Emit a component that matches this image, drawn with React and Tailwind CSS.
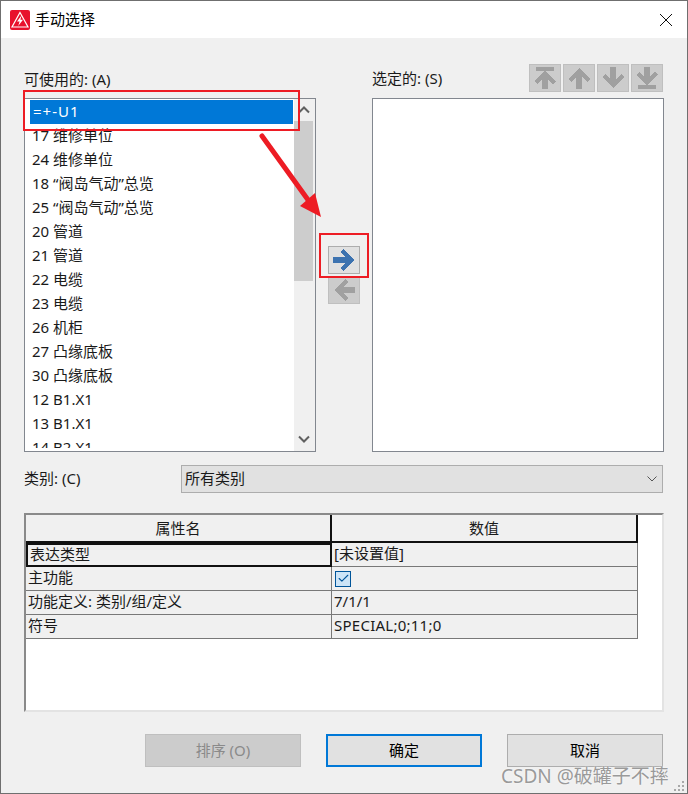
import { Check } from "lucide-react";

const items = [
  "17 维修单位",
  "24 维修单位",
  "18 “阀岛气动”总览",
  "25 “阀岛气动”总览",
  "20 管道",
  "21 管道",
  "22 电缆",
  "23 电缆",
  "26 机柜",
  "27 凸缘底板",
  "30 凸缘底板",
  "12 B1.X1",
  "13 B1.X1",
  "14 B2.X1",
];

const ARROW = "5,11 17,11 12,6 15,3 26,14 15,25 12,22 17,17 5,17";
const END_ARROW = "16,7 27,17 24,20 19,16 19,25 13,25 13,16 8,20 5,17";

function ArrowButton({ rotate = 0, end = false, active = false }) {
  const boxClass = active
    ? "bg-[#e1e1e1] border-[#adadad]"
    : "bg-[#cccccc] border-[#bfbfbf]";
  return (
    <div className={`h-[28px] w-[32px] border ${boxClass}`}>
      <svg width="30" height="26" viewBox="1 1 30 26" shapeRendering="crispEdges">
        <g transform={`rotate(${rotate} 16 14)`} fill={active ? "#3d73b0" : "#a0a0a0"}>
          <polygon points={end ? END_ARROW : ARROW} />
          {end && <rect x="7" y="3" width="18" height="4" />}
        </g>
      </svg>
    </div>
  );
}

function Chevron({ down = false }) {
  return (
    <svg width="12" height="8" viewBox="0 0 12 8">
      <path
        d={down ? "M1 1.5 L6 6.5 L11 1.5" : "M1 6.5 L6 1.5 L11 6.5"}
        fill="none"
        stroke="#606060"
        strokeWidth="2"
      />
    </svg>
  );
}

function Cell({ children, focus = false }) {
  return (
    <div
      className={`flex h-[24px] items-center bg-[#f0f0f0] pl-[2px] ${
        focus
          ? "border-2 border-[#111111] pb-px"
          : "border-b border-r border-[#787878] pb-[2px]"
      }`}
    >
      {children}
    </div>
  );
}

function FooterButton({ children, variant }) {
  const styles = {
    disabled: "bg-[#cccccc] border border-[#bfbfbf] text-[#8a8a8a]",
    primary: "bg-[#e1e1e1] border-2 border-[#0078d7] text-black",
    normal: "bg-[#e1e1e1] border border-[#adadad] text-black",
  };
  return (
    <div className={`flex h-[33px] w-[156px] items-center justify-center pb-px ${styles[variant]}`}>
      {children}
    </div>
  );
}

export default function App() {
  return (
    <div className="relative flex h-[794px] w-[688px] flex-col overflow-hidden border border-[#6f6f6f] bg-[#f0f0f0] font-['Noto_Sans','Noto_Sans_CJK_SC',sans-serif] text-[15px] leading-none text-[#1a1a1a]">
      {/* title bar */}
      <div className="flex h-[37px] shrink-0 items-center bg-white pl-[9px] pr-[15px]">
        <svg width="20" height="20" viewBox="0 0 20 20">
          <rect width="20" height="20" rx="2" fill="#e8112d" />
          <path d="M10 2.5 L18 17 H2 Z" fill="none" stroke="#fff" strokeWidth="1.2" />
          <path d="M11.5 5.5 L7 11.5 H9.6 L8.2 16 L13 9.8 H10.4 Z" fill="#fff" />
        </svg>
        <span className="ml-[5px] text-[15px] text-black">手动选择</span>
        <svg className="ml-auto" width="12" height="12" viewBox="0 0 12 12">
          <path d="M0 0 L12 12 M12 0 L0 12" stroke="#111" strokeWidth="1" />
        </svg>
      </div>

      <div className="flex flex-col pl-[23px] pt-[26px]">
        {/* lists */}
        <div className="flex h-[388px]">
          <div className="flex w-[292px] flex-col">
            <div className="flex h-[34px] items-center pb-[3px]">可使用的: (A)</div>
            <div className="flex h-[354px] border border-[#82878f] bg-white">
              <div className="mb-[3px] min-w-0 flex-1 overflow-hidden pl-[5px] pr-px pt-px">
                <div className="flex h-[24px] items-center bg-[#0078d7] pb-px pl-[3px] tracking-[1px] text-white">=+-U1</div>
                {items.map((item) => (
                  <div key={item} className="flex h-[24px] items-center whitespace-nowrap pb-px pl-[2px]">
                    {item}
                  </div>
                ))}
              </div>
              <div className="flex w-[21px] shrink-0 flex-col bg-[#f0f0f0] pr-[2px]">
                <div className="flex h-[22px] items-center justify-center">
                  <Chevron />
                </div>
                <div className="h-[160px] bg-[#cdcdcd]" />
                <div className="mb-[8px] mt-auto flex justify-center">
                  <Chevron down />
                </div>
              </div>
            </div>
          </div>

          <div className="flex w-[56px] flex-col items-center gap-[2px] pt-[182px]">
            <ArrowButton active />
            <ArrowButton rotate={180} />
          </div>

          <div className="flex w-[292px] flex-col">
            <div className="flex h-[34px] items-start justify-between pr-px">
              <span className="pt-[7px]">选定的: (S)</span>
              <div className="flex gap-[2px]">
                <ArrowButton end />
                <ArrowButton rotate={-90} />
                <ArrowButton rotate={90} />
                <ArrowButton end rotate={180} />
              </div>
            </div>
            <div className="h-[354px] border border-[#82878f] bg-white" />
          </div>
        </div>

        {/* category */}
        <div className="mt-[13px] flex h-[28px] w-[639px] items-center">
          <span className="w-[157px] pb-[2px]">类别: (C)</span>
          <div className="flex h-full flex-1 items-center justify-between border border-[#adadad] bg-[#e1e1e1] pb-px pl-[3px] pr-[5px]">
            <span>所有类别</span>
            <svg width="10" height="6" viewBox="0 0 10 6">
              <path d="M0.5 0.5 L5 5 L9.5 0.5" fill="none" stroke="#555" strokeWidth="1" />
            </svg>
          </div>
        </div>

        {/* properties table */}
        <div className="mt-[20px] h-[199px] w-[640px] border-2 border-[#e3e3e3] border-l-[#8a8a8a] border-t-[#8a8a8a] bg-white">
          <div className="grid w-[612px] grid-cols-[306px_306px]">
            <div className="flex h-[28px] items-center justify-center border-b-2 border-r-2 border-[#111111] bg-[#f0f0f0]">属性名</div>
            <div className="flex h-[28px] items-center justify-center border-b-2 border-r-2 border-[#111111] bg-[#f0f0f0]">数值</div>
            <Cell focus>表达类型</Cell>
            <Cell>[未设置值]</Cell>
            <Cell>主功能</Cell>
            <Cell>
              <div className="ml-px mt-[2px] flex h-[16px] w-[16px] items-center justify-center border border-[#005499] bg-[#cce4f7]">
                <Check size={13} strokeWidth={2} color="#005499" />
              </div>
            </Cell>
            <Cell>功能定义: 类别/组/定义</Cell>
            <Cell>7/1/1</Cell>
            <Cell>符号</Cell>
            <Cell>
              <span className="tracking-[0.25px]">SPECIAL;0;11;0</span>
            </Cell>
          </div>
        </div>

        {/* footer */}
        <div className="mt-[22px] flex w-[639px] justify-end gap-[25px]">
          <FooterButton variant="disabled">排序 (O)</FooterButton>
          <FooterButton variant="primary">确定</FooterButton>
          <FooterButton variant="normal">取消</FooterButton>
        </div>
      </div>

      {/* red annotations */}
      <div className="absolute left-[22px] top-[89px] h-[41px] w-[277px] border-2 border-[#ed1c24]" />
      <div className="absolute left-[318px] top-[232px] h-[45px] w-[50px] border-2 border-[#ed1c24]" />
      <svg className="absolute left-0 top-0" width="688" height="794" viewBox="1 1 688 794">
        <path d="M262 136 L311 204" stroke="#ed1c24" strokeWidth="5" strokeLinecap="round" />
        <polygon points="321,217 300,206 315,193" fill="#ed1c24" />
      </svg>

      {/* watermark */}
      <span className="absolute left-[500px] top-[765px] text-[19px] leading-[20px] text-[#9a9a9a] [text-shadow:0_0_2px_#ffffff]">
        CSDN @破罐子不摔
      </span>
      <svg className="absolute left-[673px] top-[780px]" width="12" height="10" viewBox="0 0 12 10">
        <path d="M8 0h2v2H8z M4 4h2v2H4z M8 4h2v2H8z M0 8h2v2H0z M4 8h2v2H4z M8 8h2v2H8z" fill="#a8a8a8" />
      </svg>
    </div>
  );
}
